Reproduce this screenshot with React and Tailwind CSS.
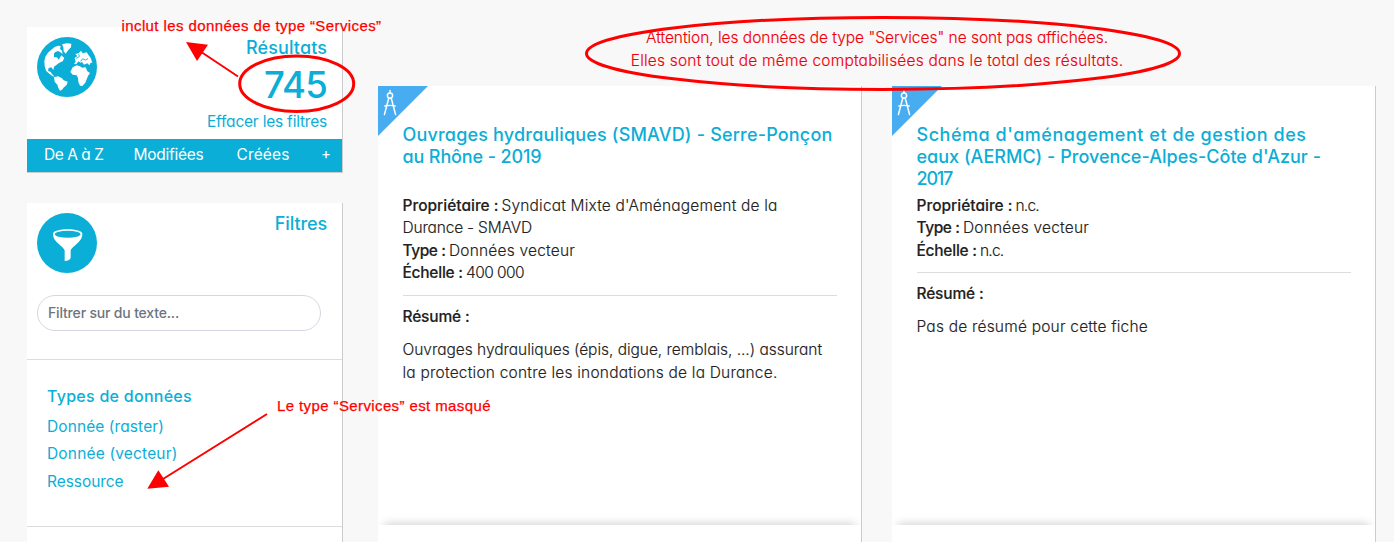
function GlobeIcon() {
  return (
    <svg viewBox="15 15 180 180" className="size-[60px] shrink-0">
      <circle cx="105" cy="105" r="90" fill="#0baed6" />
      <g fill="#fff">
        <path d="M37 88 L40 74 L48 62 L58 53 L68 45 L78 41 L86 42 L84 50 L90 56 L92 66 L84 60 L78 57 L70 60 L64 66 L66 76 L76 77 L80 84 L88 70 L97 78 L92 88 L82 92 L74 98 L66 104 L64 114 L58 106 L50 108 L48 116 L56 120 L60 126 L68 134 L62 133 L50 124 L42 116 L38 102 Z" />
        <path d="M46 70 L58 57 L72 48 L80 52 L66 62 L66 76 L76 77 L80 86 L74 96 L60 102 L48 104 L42 98 Z" />
        <path d="M90 37 L104 34 L118 35 L117 46 L109 54 L101 65 L95 58 L94 46 Z" />
        <path d="M66 136 L78 133 L90 139 L95 145 L107 149 L104 159 L96 166 L90 173 L84 176 L79 168 L76 158 L68 149 Z" />
        <path d="M128 78 L136 72 L130 66 L140 64 L147 56 L152 64 L164 61 L170 70 L176 78 L181 92 L176 92 L172 100 L166 94 L156 98 L150 90 L145 92 L140 88 L132 97 L126 95 L131 90 Z" />
        <path d="M122 106 L134 100 L144 103 L150 107 L161 106 L166 118 L174 123 L168 132 L164 142 L160 152 L151 162 L144 161 L139 150 L138 138 L134 130 L122 128 L115 120 Z" />
      </g>
      <g stroke="#0baed6" strokeWidth="2.5" fill="none">
        <path d="M132 79 L142 74 L140 66 M146 88 L152 80 L160 84 L168 80" />
      </g>
    </svg>
  );
}

function FunnelIcon() {
  return (
    <svg viewBox="15 15 180 180" className="size-[60px] shrink-0">
      <circle cx="105" cy="105" r="90" fill="#0baed6" />
      <path
        d="M63 77 C63 59 151 59 151 77 C151 91 143 99 136 106 C127 115 117 122 116 128 L116 150 Q112 159 98 159 L98 128 C97 122 87 115 78 106 C71 99 63 91 63 77 Z"
        fill="#fff"
      />
      <ellipse cx="107" cy="79" rx="38.5" ry="10.5" fill="#0baed6" />
    </svg>
  );
}

function CornerBadge() {
  return (
    <svg viewBox="0 0 50 50" className="absolute left-0 top-0 size-[50px]">
      <path d="M0 0 H50 L0 50 Z" fill="#48acf0" />
      <g fill="none" stroke="#fff" strokeLinecap="round">
        <path d="M12 4.5 V7" strokeWidth="1.4" />
        <circle cx="12" cy="9.6" r="2.6" strokeWidth="1.5" />
        <path d="M10.8 12 L6.4 28.6 M13.2 12 L17.6 28.6" strokeWidth="1.5" />
        <path d="M6.8 20 Q12 18.6 17.2 20" strokeWidth="1.3" />
      </g>
    </svg>
  );
}

function Line({ className = '', children }) {
  return <span className={`block whitespace-nowrap ${className}`}>{children}</span>;
}

function Card({ title, children }) {
  return (
    <article className="relative flex h-[456px] w-[484px] flex-col overflow-hidden border-r border-[#ccc] bg-white">
      <CornerBadge />
      <div className="flex-1 pl-[24.5px] pr-6 pt-[37.5px]">
        <h2 className="h-[71.25px] text-[18px] font-medium leading-[22px] text-[#0baed6]">{title}</h2>
        <div className="text-[15.5px] font-light leading-[22.4px] text-[#222] [-webkit-text-stroke:0.15px_#222]">
          {children}
        </div>
      </div>
      <div className="h-[17px] shrink-0 bg-white shadow-[0_-6px_10px_-6px_rgba(0,0,0,0.3)]" />
    </article>
  );
}

function Label({ className, children }) {
  return <strong className={`inline-block whitespace-nowrap font-medium ${className}`}>{children}</strong>;
}

export default function App() {
  return (
    <div className="relative flex h-[542px] w-[1394px] overflow-hidden bg-[#f8f8f8] font-['Inter','Liberation_Sans',sans-serif] [font-feature-settings:'cv11']">
      <aside className="ml-[27px] mt-[27px] flex w-[316px] shrink-0 flex-col gap-[30px] text-[#0baed6]">
        <section className="flex h-[146px] flex-col border-b border-r border-[#ccc] bg-white">
          <div className="flex h-[112px] justify-between pl-[10px] pr-[15px] pt-[10px]">
            <GlobeIcon />
            <div className="flex flex-col items-end pt-px">
              <span className="h-[20px] text-[18px] font-medium leading-[20px] tracking-[0.1px]">Résultats</span>
              <span className="mt-[5px] h-[44px] text-[36.5px] font-medium leading-[44px] tracking-[-0.75px]">745</span>
              <span className="mt-[5px] text-[15.5px] leading-[20px] tracking-[-0.21px]">Effacer les filtres</span>
            </div>
          </div>
          <nav className="flex h-[33px] shrink-0 items-center whitespace-nowrap bg-[#0baed6] pb-[2px] pl-[17px] text-[15.5px] text-white">
            <span className="w-[89.5px] tracking-[-0.47px]">De A à Z</span>
            <span className="w-[103px] tracking-[-0.26px]">Modifiées</span>
            <span className="w-[84.5px] tracking-[0.13px]">Créées</span>
            <span className="text-[15px]">+</span>
          </nav>
        </section>

        <section className="flex h-[345px] flex-col border-r border-[#ccc] bg-white">
          <div className="h-[157px] shrink-0 border-b border-[#ddd] pl-[10px] pt-[10px]">
            <div className="flex justify-between pr-[15px]">
              <FunnelIcon />
              <h2 className="pt-px text-[18px] font-medium leading-[20px] tracking-[-0.1px]">Filtres</h2>
            </div>
            <div className="mt-[22px] flex h-[36px] w-[284px] items-center rounded-full border border-[#d5d7e2] pb-px pl-[10px] text-[14px] font-medium tracking-[-0.17px] text-[#6c757d]">
              Filtrer sur du texte...
            </div>
          </div>
          <div className="h-[167px] shrink-0 border-b border-[#ddd] pl-5 pt-[25px]">
            <h3 className="h-[28px] text-[16px] font-medium leading-[22px] tracking-[0.27px]">Types de données</h3>
            <ul className="text-[15.5px] leading-[27.4px]">
              <li className="tracking-[0.09px]">Donnée (raster)</li>
              <li className="tracking-[0.17px]">Donnée (vecteur)</li>
              <li className="tracking-[-0.06px]">Ressource</li>
            </ul>
          </div>
        </section>
      </aside>

      <main className="ml-[35px] w-[998px] shrink-0">
        <p className="h-[86px] pt-[27px] text-center text-[15.5px] font-light leading-[22.6px] text-[#f00008] [-webkit-text-stroke:0.15px_#f00008]">
          <Line className="tracking-[-0.03px]">Attention, les données de type "Services" ne sont pas affichées.</Line>
          <Line className="tracking-[0.198px]">Elles sont tout de même comptabilisées dans le total des résultats.</Line>
        </p>
        <div className="flex gap-[30px]">
          <Card
            title={
              <>
                <Line className="tracking-[0.184px]">Ouvrages hydrauliques (SMAVD) - Serre-Ponçon</Line>
                <Line className="tracking-[-0.131px]">au Rhône - 2019</Line>
              </>
            }
          >
            <Line className="tracking-[0.179px]">
              <Label className="w-[99px] tracking-[0px]">Propriétaire :</Label>Syndicat Mixte d'Aménagement de la
            </Line>
            <Line className="tracking-[-0.18px]">Durance - SMAVD</Line>
            <Line className="tracking-[0.195px]">
              <Label className="w-[46.5px] tracking-[-0.43px]">Type :</Label>Données vecteur
            </Line>
            <Line className="tracking-[-0.57px]">
              <Label className="w-[63.5px] tracking-[-0.25px]">Échelle :</Label>400 000
            </Line>
            <hr className="mb-[10px] mt-[10.25px] border-[#ddd]" />
            <Label className="block tracking-[-0.16px]">Résumé :</Label>
            <p className="mt-[9.6px] leading-[23px]">
              <Line className="tracking-[-0.032px]">Ouvrages hydrauliques (épis, digue, remblais, ...) assurant</Line>
              <Line className="tracking-[0.215px]">la protection contre les inondations de la Durance.</Line>
            </p>
          </Card>
          <Card
            title={
              <>
                <Line className="tracking-[0.541px]">Schéma d'aménagement et de gestion des</Line>
                <Line className="tracking-[0.018px]">eaux (AERMC) - Provence-Alpes-Côte d'Azur -</Line>
                <Line className="tracking-[-1.2px]">2017</Line>
              </>
            }
          >
            <Line className="tracking-[-0.77px]">
              <Label className="w-[99px] tracking-[0px]">Propriétaire :</Label>n.c.
            </Line>
            <Line className="tracking-[0.195px]">
              <Label className="w-[46.5px] tracking-[-0.43px]">Type :</Label>Données vecteur
            </Line>
            <Line className="tracking-[-0.77px]">
              <Label className="w-[63.5px] tracking-[-0.25px]">Échelle :</Label>n.c.
            </Line>
            <hr className="mb-[10px] mt-[10.25px] border-[#ddd]" />
            <Label className="block tracking-[-0.16px]">Résumé :</Label>
            <p className="mt-[10.7px]">
              <Line className="tracking-[0.204px]">Pas de résumé pour cette fiche</Line>
            </p>
          </Card>
        </div>
      </main>

      <svg viewBox="0 0 1394 542" className="pointer-events-none absolute inset-0 h-[542px] w-[1394px]">
        <g fill="none" stroke="#f00">
          <ellipse cx="883" cy="53.4" rx="296.5" ry="36" strokeWidth="3" />
          <ellipse cx="296.7" cy="83.7" rx="57" ry="27.7" strokeWidth="3" />
          <path d="M238 76.5 L202 52.5 M267 414 L163 479" strokeWidth="2" />
        </g>
        <path d="M186 42 L208 44.7 L197 61 Z M147.3 488.7 L158.3 470.3 L169 486.7 Z" fill="#f00" />
      </svg>
      <span className="absolute left-[121.5px] top-[16px] whitespace-nowrap font-['Liberation_Sans',sans-serif] text-[15px] leading-[20px] tracking-[0.402px] text-[#f00] [-webkit-text-stroke:0.25px_#f00]">
        inclut les données de type “Services”
      </span>
      <span className="absolute left-[277px] top-[396px] whitespace-nowrap font-['Liberation_Sans',sans-serif] text-[15px] leading-[20px] tracking-[0.39px] text-[#f00] [-webkit-text-stroke:0.25px_#f00]">
        Le type “Services” est masqué
      </span>
    </div>
  );
}
